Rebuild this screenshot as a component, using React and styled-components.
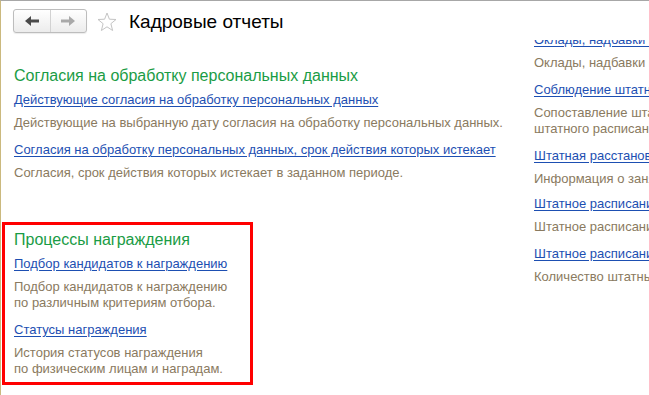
import React from "react";
import styled, { createGlobalStyle } from "styled-components";

const GlobalStyle = createGlobalStyle`
  html, body {
    margin: 0;
    padding: 0;
    background: #fff;
    overflow: hidden;
  }
  body {
    font-family: "Liberation Sans", Arial, sans-serif;
  }
`;

const Frame = styled.div`
  width: 649px;
  height: 395px;
  box-sizing: border-box;
  border-top: 1px solid #a7a7a7;
  border-left: 1px solid #cbb97e;
  background: #fff;
  overflow: hidden;
  display: flex;
  flex-direction: column;
`;

const Header = styled.div`
  height: 36px;
  flex: 0 0 36px;
  display: flex;
  align-items: flex-start;
  padding: 8px 0 0 12px;
  box-sizing: border-box;
`;

const NavGroup = styled.div`
  display: flex;
  width: 74px;
  height: 24px;
  box-sizing: border-box;
  border: 1px solid #bdbdbd;
  border-radius: 3px;
  background: linear-gradient(#ffffff, #ececec);
  box-shadow: 0 1px 1px rgba(0, 0, 0, 0.08);
`;

const NavButton = styled.div`
  flex: 1;
  display: flex;
  align-items: center;
  justify-content: center;
  color: ${(p) => (p.$dim ? "#a9a9a9" : "#4a4a4a")};
  & + & {
    border-left: 1px solid #d2d2d2;
  }
`;

const StarWrap = styled.div`
  margin: 3px 0 0 10px;
  width: 20px;
  height: 20px;
`;

const Title = styled.div`
  margin-left: 12px;
  font-size: 19px;
  line-height: 26px;
  color: #000;
`;

const Body = styled.div`
  flex: 1;
  display: flex;
  min-height: 0;
  padding-left: 13px;
`;

const LeftColumn = styled.div`
  flex: 0 0 520px;
  padding-top: 29px;
`;

const RightColumn = styled.div`
  flex: 1;
  min-width: 0;
  margin-top: 3px;
  overflow: hidden;
`;

const RightInner = styled.div`
  margin-top: -8px;
  white-space: nowrap;
`;

const Section = styled.div`
  ${(p) =>
    p.$highlight
      ? `
    width: 251px;
    box-sizing: border-box;
    margin: 0 0 0 -12px;
    padding: 5px 0 0 9px;
    height: 163px;
    border: 3px solid #ff0000;
  `
      : `
    margin-bottom: 41px;
  `}
`;

const Heading = styled.div`
  font-size: 16px;
  line-height: 20px;
  color: #1a9c45;
  margin-bottom: 6px;
`;

const Item = styled.div`
  margin-bottom: ${(p) => (p.$gap ? p.$gap : 11)}px;
`;

const ItemLink = styled.a`
  display: block;
  width: fit-content;
  font-size: 13px;
  line-height: 16px;
  color: #1d4fb2;
  text-decoration: underline;
  text-underline-offset: 2px;
  margin-bottom: 7px;
  cursor: pointer;
`;

const Description = styled.div`
  font-size: 13px;
  line-height: 16px;
  color: #8a7a60;
`;

function ArrowIcon({ dir }) {
  const flip = dir === "right" ? "scale(-1,1) translate(-14,0)" : undefined;
  return (
    <svg width="14" height="10" viewBox="0 0 14 10">
      <g transform={flip} fill="currentColor">
        <polygon points="0,5 6,0 6,10" />
        <rect x="5" y="3.5" width="9" height="3" />
      </g>
    </svg>
  );
}

function StarIcon() {
  return (
    <svg width="20" height="20" viewBox="0 0 20 20">
      <polygon
        points="10,1 12.4,7.2 19,7.5 13.9,11.7 15.6,18.5 10,14.8 4.4,18.5 6.1,11.7 1,7.5 7.6,7.2"
        fill="none"
        stroke="#c4c4c4"
        strokeWidth="1"
        strokeLinejoin="round"
      />
    </svg>
  );
}

const leftSections = [
  {
    title: "Согласия на обработку персональных данных",
    items: [
      {
        link: "Действующие согласия на обработку персональных данных",
        desc: ["Действующие на выбранную дату согласия на обработку персональных данных."],
      },
      {
        link: "Согласия на обработку персональных данных, срок действия которых истекает",
        desc: ["Согласия, срок действия которых истекает в заданном периоде."],
      },
    ],
  },
  {
    title: "Процессы награждения",
    highlight: true,
    items: [
      {
        link: "Подбор кандидатов к награждению",
        desc: ["Подбор кандидатов к награждению", "по различным критериям отбора."],
      },
      {
        link: "Статусы награждения",
        desc: ["История статусов награждения", "по физическим лицам и наградам."],
      },
    ],
  },
];

const rightItems = [
  { link: "Оклады, надбавки и доплаты", desc: ["Оклады, надбавки и доплаты сотрудников."] },
  {
    link: "Соблюдение штатного расписания",
    desc: ["Сопоставление штатной расстановки и", "штатного расписания."],
  },
  { link: "Штатная расстановка", desc: ["Информация о занятых позициях."], gap: 9 },
  { link: "Штатное расписание", desc: ["Штатное расписание организации."] },
  { link: "Штатное расписание (количество)", desc: ["Количество штатных единиц."] },
];

function ReportItem({ item }) {
  return (
    <Item $gap={item.gap}>
      <ItemLink>{item.link}</ItemLink>
      <Description>
        {item.desc.map((line, i) => (
          <div key={i}>{line}</div>
        ))}
      </Description>
    </Item>
  );
}

export default function App() {
  return (
    <>
      <GlobalStyle />
      <Frame>
        <Header>
          <NavGroup>
            <NavButton>
              <ArrowIcon dir="left" />
            </NavButton>
            <NavButton $dim>
              <ArrowIcon dir="right" />
            </NavButton>
          </NavGroup>
          <StarWrap>
            <StarIcon />
          </StarWrap>
          <Title>Кадровые отчеты</Title>
        </Header>
        <Body>
          <LeftColumn>
            {leftSections.map((s) => (
              <Section key={s.title} $highlight={s.highlight}>
                <Heading>{s.title}</Heading>
                {s.items.map((it) => (
                  <ReportItem key={it.link} item={it} />
                ))}
              </Section>
            ))}
          </LeftColumn>
          <RightColumn>
            <RightInner>
              {rightItems.map((it) => (
                <ReportItem key={it.link} item={it} />
              ))}
            </RightInner>
          </RightColumn>
        </Body>
      </Frame>
    </>
  );
}
